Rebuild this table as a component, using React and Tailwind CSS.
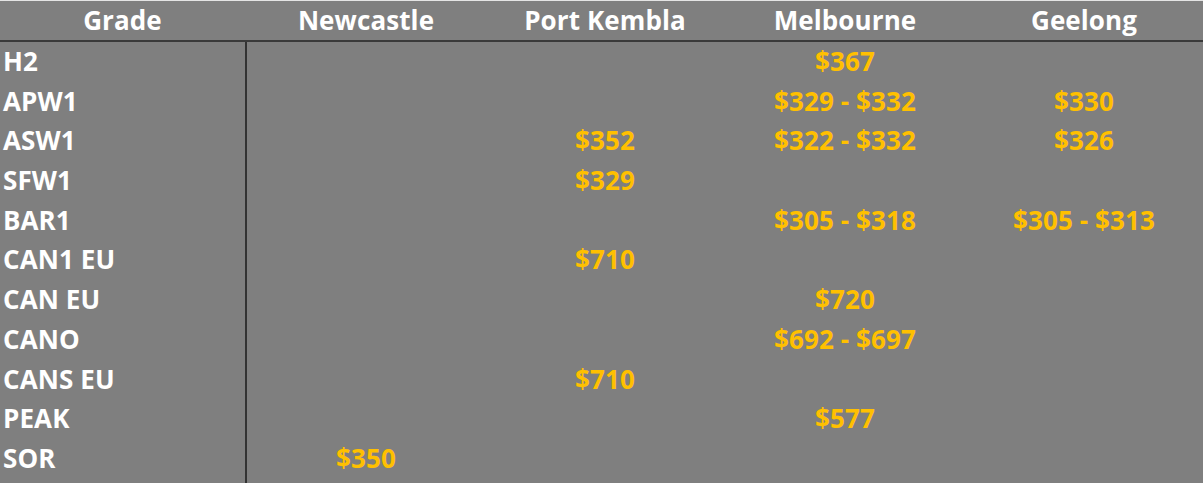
const COLUMNS = ['Newcastle', 'Port Kembla', 'Melbourne', 'Geelong']

const ROWS = [
  { grade: 'H2', prices: ['', '', '$367', ''] },
  { grade: 'APW1', prices: ['', '', '$329 - $332', '$330'] },
  { grade: 'ASW1', prices: ['', '$352', '$322 - $332', '$326'] },
  { grade: 'SFW1', prices: ['', '$329', '', ''] },
  { grade: 'BAR1', prices: ['', '', '$305 - $318', '$305 - $313'] },
  { grade: 'CAN1 EU', prices: ['', '$710', '', ''] },
  { grade: 'CAN EU', prices: ['', '', '$720', ''] },
  { grade: 'CANO', prices: ['', '', '$692 - $697', ''] },
  { grade: 'CANS EU', prices: ['', '$710', '', ''] },
  { grade: 'PEAK', prices: ['', '', '$577', ''] },
  { grade: 'SOR', prices: ['$350', '', '', ''] },
]

const GRID = 'grid grid-cols-[247px_238px_240px_240px_1fr]'

export default function App() {
  return (
    <div
      className="w-[1203px] h-[483px] overflow-hidden flex flex-col bg-[#7f7f7f] border-t border-[#e4e4e4] font-bold text-[26px] tracking-[0.1px]"
      style={{ fontFamily: '"Open Sans", "Liberation Sans", sans-serif' }}
    >
      <div className={`${GRID} h-[41px] shrink-0 border-b-2 border-[#3a3a3a] text-white leading-[39px]`}>
        <div className="text-center pr-[2px]">Grade</div>
        {COLUMNS.map((col) => (
          <div key={col} className="text-center">{col}</div>
        ))}
      </div>

      {ROWS.map((row, idx) => (
        <div
          key={row.grade}
          className={`${GRID} leading-[39.7px] ${idx === ROWS.length - 1 ? 'flex-1' : 'h-[39.7px] shrink-0'}`}
        >
          <div className="pl-[3px] text-white border-r-2 border-[#333333]">{row.grade}</div>
          {row.prices.map((price, i) => (
            <div key={i} className="text-center text-[#ffc000]">{price}</div>
          ))}
        </div>
      ))}
    </div>
  )
}
